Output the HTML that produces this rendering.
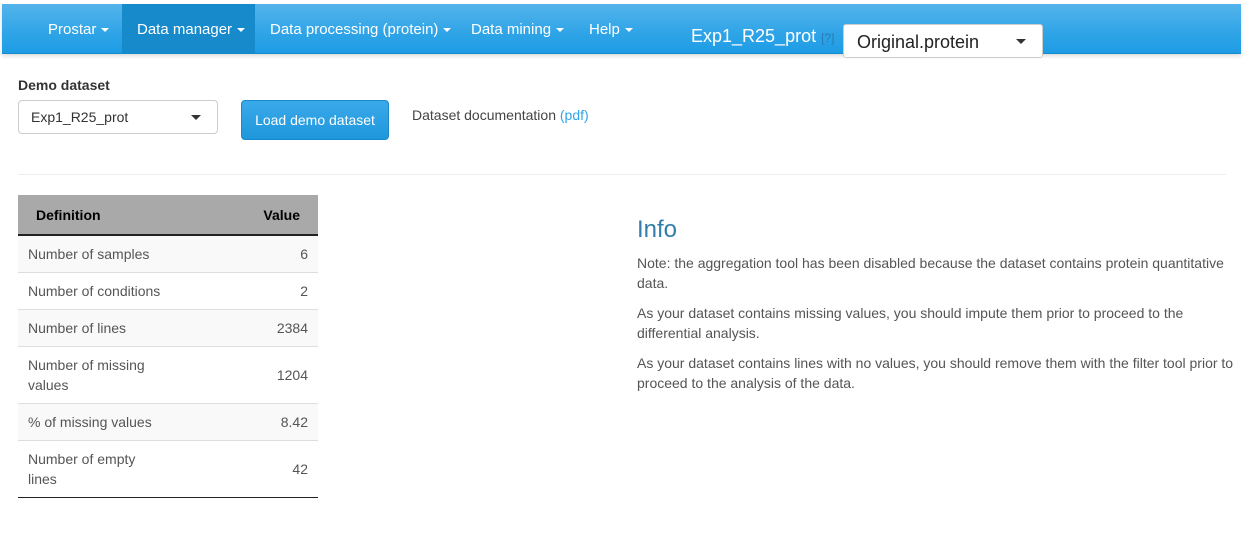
<!DOCTYPE html>
<html><head><meta charset="utf-8"><style>
*{box-sizing:border-box;margin:0;padding:0}
body{width:1251px;height:538px;background:#fff;font-family:"Liberation Sans",sans-serif;font-size:14px;color:#555;position:relative;overflow:hidden}
.nav{position:absolute;left:2px;top:4px;width:1239px;height:50px;background:linear-gradient(#54b4eb,#2fa4e7 60%,#1d9ce5);box-shadow:0 2px 4px rgba(0,0,0,.15);border-bottom:1px solid #178acc}
.nav a{position:absolute;top:0;height:50px;line-height:51px;color:#fff;font-size:15px;padding:0 15px;white-space:nowrap}
.car{display:inline-block;width:0;height:0;border-left:4px solid transparent;border-right:4px solid transparent;border-top:4px solid #fff;vertical-align:middle;margin-left:5px}
.act{background:#178acc}
.abs{position:absolute}
.sel{position:absolute;background:#fff;border:1px solid #ccc;border-radius:4px}
.dcar{position:absolute;width:0;height:0;border-left:5px solid transparent;border-right:5px solid transparent;border-top:5px solid #333}
table{position:absolute;left:18px;top:195px;width:300px;border-collapse:collapse}
th{background:#a9a9a9;color:#000;font-weight:bold;height:40px;border-bottom:2px solid #222;font-size:14px}
td{border-top:1px solid #ddd;padding:0 10px;height:37px;line-height:20px}
tr:nth-child(even) td{background:#f9f9f9}
.r{text-align:right}
p{font-size:14px;line-height:20px}
</style></head><body>
<div class="nav">
<a style="left:31px">Prostar<span class="car"></span></a>
<a class="act" style="left:120px;width:133px">Data manager<span class="car"></span></a>
<a style="left:253px;padding-right:20px">Data processing (protein)<span class="car"></span></a>
<a style="left:454px">Data mining<span class="car"></span></a>
<a style="left:572px">Help<span class="car"></span></a>
<div class="abs" style="left:689px;top:22px;color:#fff;font-size:18px">Exp1_R25_prot <span style="font-size:12px;color:#2a7ab0">[?]</span></div>
</div>
<div class="sel" style="left:843px;top:24px;width:200px;height:34px;border-radius:3px"><span class="abs" style="left:13px;top:7px;font-size:18px;color:#222">Original.protein</span><div class="dcar" style="left:172px;top:14px"></div></div>
<div class="abs" style="left:18px;top:77px;font-weight:bold;color:#333">Demo dataset</div>
<div class="sel" style="left:18px;top:100px;width:200px;height:34px"><span class="abs" style="left:12px;top:8px;color:#333">Exp1_R25_prot</span><div class="dcar" style="left:172px;top:14px"></div></div>
<div class="abs" style="left:241px;top:100px;width:148px;height:40px;background:linear-gradient(#3aa9ea,#1f97dc);border:1px solid #178acc;border-radius:4px;color:#fff;line-height:38px;text-align:center">Load demo dataset</div>
<div class="abs" style="left:412px;top:107px;color:#444">Dataset documentation <span style="color:#2fa4e7">(pdf)</span></div>
<div class="abs" style="left:18px;top:174px;width:1208px;border-top:1px solid #eee"></div>
<table>
<tr><th style="text-align:left;padding-left:18px">Definition</th><th class="r" style="padding-right:18px">Value</th></tr>
<tr><td>Number of samples</td><td class="r">6</td></tr>
<tr><td>Number of conditions</td><td class="r">2</td></tr>
<tr><td>Number of lines</td><td class="r">2384</td></tr>
<tr><td style="height:57px">Number of missing<br>values</td><td class="r">1204</td></tr>
<tr><td>% of missing values</td><td class="r">8.42</td></tr>
<tr><td style="height:57px;border-bottom:1px solid #222">Number of empty<br>lines</td><td class="r" style="border-bottom:1px solid #222">42</td></tr>
</table>
<div class="abs" style="left:637px;top:216px;width:600px">
<div style="font-size:24px;color:#317eac;margin-bottom:9px">Info</div>
<p>Note: the aggregation tool has been disabled because the dataset contains protein quantitative data.</p>
<p style="margin-top:10px">As your dataset contains missing values, you should impute them prior to proceed to the differential analysis.</p>
<p style="margin-top:10px">As your dataset contains lines with no values, you should remove them with the filter tool prior to proceed to the analysis of the data.</p>
</div>
</body></html>
